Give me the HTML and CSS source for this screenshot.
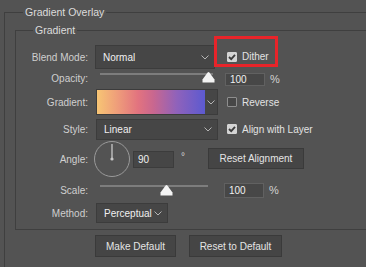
FILE: index.html
```html
<!DOCTYPE html>
<html>
<head>
<meta charset="utf-8">
<link rel="stylesheet" href="styles.css">
</head>
<body>
<fieldset class="outer">
  <legend class="outer-legend">Gradient Overlay</legend>
  <fieldset class="inner">
    <legend class="inner-legend">Gradient</legend>
    <div class="grid">
      <div class="label">Blend Mode:</div>
      <div class="ctrl"><div class="select blend"><span>Normal</span><svg class="chev" width="8" height="5" viewBox="0 0 8 5"><path d="M0.5 0.5 L4 4 L7.5 0.5" fill="none" stroke="#b5b5b5" stroke-width="1"/></svg></div></div>
      <div class="extra">
        <div class="check-item dither">
          <span class="cb checked"><svg width="10" height="10" viewBox="0 0 10 10"><path d="M2 5 L4.2 7.2 L8 2.8" fill="none" stroke="#3b3b3b" stroke-width="1.8"/></svg></span>
          <span class="cb-text">Dither</span>
          <span class="highlight"></span>
        </div>
      </div>

      <div class="label">Opacity:</div>
      <div class="ctrl"><div class="slider op"><span class="track"></span><svg class="thumb" style="left:102px" width="13" height="12" viewBox="0 0 13 12"><path d="M0.5 11.5 L0.5 8.5 L5.6 1.4 Q6.5 0.4 7.4 1.4 L12.5 8.5 L12.5 11.5 Z" fill="#f4f4f4"/></svg></div></div>
      <div class="extra"><div class="num op-num">100</div><span class="unit">%</span></div>

      <div class="label">Gradient:</div>
      <div class="ctrl"><div class="gradient"><span class="grad-bar"></span><span class="grad-chev"><svg width="8" height="5" viewBox="0 0 8 5"><path d="M0.5 0.5 L4 4 L7.5 0.5" fill="none" stroke="#b5b5b5" stroke-width="1"/></svg></span></div></div>
      <div class="extra"><div class="check-item"><span class="cb"></span><span class="cb-text">Reverse</span></div></div>

      <div class="label">Style:</div>
      <div class="ctrl"><div class="select style"><span>Linear</span><svg class="chev" width="8" height="5" viewBox="0 0 8 5"><path d="M0.5 0.5 L4 4 L7.5 0.5" fill="none" stroke="#b5b5b5" stroke-width="1"/></svg></div></div>
      <div class="extra"><div class="check-item"><span class="cb checked"><svg width="10" height="10" viewBox="0 0 10 10"><path d="M2 5 L4.2 7.2 L8 2.8" fill="none" stroke="#3b3b3b" stroke-width="1.8"/></svg></span><span class="cb-text">Align with Layer</span></div></div>

      <div class="label">Angle:</div>
      <div class="ctrl angle-ctrl">
        <svg class="dial" width="38" height="38" viewBox="0 0 38 38"><circle cx="19" cy="19" r="17.5" fill="none" stroke="#9a9a9a" stroke-width="1"/><line x1="19" y1="19" x2="19" y2="4" stroke="#c8c8c8" stroke-width="1.3"/><circle cx="19" cy="19" r="1.6" fill="#c8c8c8"/></svg>
        <div class="num angle-num">90</div>
        <span class="deg">°</span>
        <div class="button reset-align">Reset Alignment</div>
      </div>

      <div class="label">Scale:</div>
      <div class="ctrl"><div class="slider sc"><span class="track"></span><svg class="thumb" style="left:60px" width="13" height="12" viewBox="0 0 13 12"><path d="M0.5 11.5 L0.5 8.5 L5.6 1.4 Q6.5 0.4 7.4 1.4 L12.5 8.5 L12.5 11.5 Z" fill="#f4f4f4"/></svg></div></div>
      <div class="extra"><div class="num sc-num">100</div><span class="unit">%</span></div>

      <div class="label">Method:</div>
      <div class="ctrl"><div class="select method"><span>Perceptual</span><svg class="chev" width="8" height="5" viewBox="0 0 8 5"><path d="M0.5 0.5 L4 4 L7.5 0.5" fill="none" stroke="#b5b5b5" stroke-width="1"/></svg></div></div>
      <div class="extra"></div>
    </div>
  </fieldset>
  <div class="buttons">
    <div class="button make">Make Default</div>
    <div class="button reset">Reset to Default</div>
  </div>
</fieldset>
</body>
</html>
```

FILE: styles.css
```css
html, body {
  margin: 0;
  padding: 0;
}
body {
  background: #535353;
  overflow: hidden;
  width: 366px;
  height: 267px;
  padding-top: 6px;
  box-sizing: border-box;
  font-family: "Liberation Sans", Arial, sans-serif;
  font-size: 10px;
  color: #d2d2d2;
}
fieldset {
  margin: 0;
  padding: 0;
  border: 1px solid #3f3f3f;
  min-width: 0;
  box-sizing: border-box;
}
legend {
  padding: 0 2px;
  line-height: 12px;
  color: #dcdcdc;
  font-size: 10.5px;
}
.outer {
  margin-left: 4px;
  width: 362px;
  height: 261px;
  border-right: none;
  border-bottom: none;
}
.outer-legend {
  margin-left: 18px;
}
.inner {
  margin: 6px 0 0 10px;
  width: 351px;
  border-right: none;
  padding: 8px 0 5px 0;
}
.inner-legend {
  margin-left: 17px;
}
.grid {
  display: grid;
  grid-template-columns: 79px 131px 1fr;
  grid-template-rows: 26px 16px 32px 22px 38px 24px 22px;
  align-items: center;
}
.label {
  text-align: right;
  padding-right: 7px;
  color: #cfcfcf;
  white-space: nowrap;
}
.ctrl, .extra {
  display: flex;
  align-items: center;
  height: 100%;
}
.select {
  box-sizing: border-box;
  display: flex;
  align-items: center;
  justify-content: space-between;
  background: #464646;
  border: 1px solid #3c3c3c;
  color: #f0f0f0;
  padding: 0 5px 0 7px;
}
.select.blend { width: 120px; height: 24px; }
.select.style { width: 122px; height: 21px; margin-left: 1px; padding-left: 7px; }
.select.method { width: 72px; height: 20px; margin-left: 1px; }
.chev { display: block; }

.check-item {
  position: relative;
  display: flex;
  align-items: center;
  margin-left: 1px;
  height: 14px;
}
.cb {
  box-sizing: border-box;
  width: 10px;
  height: 10px;
  border: 1px solid #8e8e8e;
  background: #474747;
  border-radius: 1px;
  display: flex;
}
.cb.checked {
  background: #d4d4d4;
  border-color: #d4d4d4;
}
.cb.checked svg { margin: -1px; }
.cb-text {
  margin-left: 5px;
  color: #e2e2e2;
  white-space: nowrap;
}
.dither { margin-top: -1px; }
.highlight {
  position: absolute;
  left: -13px;
  top: -14px;
  width: 58px;
  height: 25px;
  border: 3px solid #e8242a;
}

.slider {
  position: relative;
  margin-left: 5px;
  height: 16px;
  align-self: flex-start;
}
.slider.op { width: 113px; }
.slider.sc { width: 108px; margin-top: 5px; }
.track {
  position: absolute;
  left: 0;
  right: 0;
  top: 3px;
  height: 2px;
  background: #7d7d7d;
}
.slider.sc .track { top: 2px; }
.thumb {
  position: absolute;
  top: 1px;
}

.num {
  box-sizing: border-box;
  width: 40px;
  height: 13px;
  background: #474747;
  border: 1px solid #616161;
  color: #f0f0f0;
  padding-left: 4px;
  line-height: 11px;
  margin-left: -1px;
}
.op-num { margin-top: 2px; height: 13px; }
.sc-num { margin-left: -2px; height: 15px; line-height: 13px; }
.unit {
  margin-left: 5px;
  color: #d2d2d2;
  font-size: 11px;
}
.op-num + .unit { margin-top: 2px; }

.gradient {
  display: flex;
  margin-left: 1px;
  height: 26px;
  width: 122px;
  box-sizing: border-box;
  border: 1px solid #3c3c3c;
}
.grad-bar {
  flex: 1;
  background: linear-gradient(90deg, #f7c574 0%, #ef9f7a 18%, #e2737f 38%, #c9678f 52%, #8f62bb 74%, #5c5ad0 100%);
}
.grad-chev {
  width: 12px;
  background: #464646;
  display: flex;
  align-items: center;
  justify-content: center;
}

.angle-ctrl {
  grid-column: 2 / 4;
}
.dial {
  display: block;
  margin-left: -2px;
}
.angle-num {
  margin-left: 2px;
  width: 41px;
  height: 17px;
  line-height: 15px;
  border-color: #3c3c3c;
  background: #464646;
}
.deg {
  margin-left: 7px;
  margin-top: -6px;
  color: #d2d2d2;
}
.button {
  box-sizing: border-box;
  display: flex;
  align-items: center;
  justify-content: center;
  background: #454545;
  border: 1px solid #3a3a3a;
  color: #e4e4e4;
  white-space: nowrap;
}
.reset-align {
  margin-left: 23px;
  width: 96px;
  height: 21px;
  margin-top: -1px;
}
.buttons {
  display: flex;
  gap: 13px;
  margin: 5px 0 0 90px;
}
.make { width: 81px; height: 22px; }
.reset { width: 93px; height: 22px; }
```
